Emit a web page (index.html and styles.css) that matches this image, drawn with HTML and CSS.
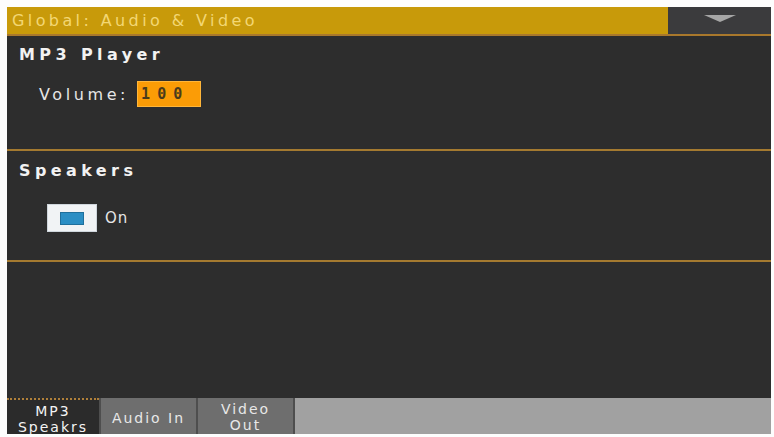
FILE: index.html
```html
<!DOCTYPE html>
<html lang="en">
  <head>
    <meta charset="UTF-8" />
    <meta name="viewport" content="width=device-width, initial-scale=1.0" />
    <title>Global: Audio &amp; Video</title>
    <link rel="stylesheet" href="styles.css">
  </head>
  <body>
    <div class="screen">
      <header class="titlebar">
        <h1>Global: Audio &amp; Video</h1>
        <button class="menu" aria-label="Menu"><i></i></button>
      </header>

      <section class="panel mp3">
        <h2>MP3 Player</h2>
        <div class="field">
          <label>Volume:</label>
          <span class="value">100</span>
        </div>
      </section>

      <section class="panel speakers">
        <h2>Speakers</h2>
        <label class="check">
          <span class="box"><i></i></span>
          On
        </label>
      </section>

      <div class="spacer"></div>

      <nav class="tabs">
        <span class="tab active">MP3<br>Speakrs</span>
        <span class="tab">Audio In</span>
        <span class="tab two-line">Video<br>Out</span>
        <span class="rest"></span>
      </nav>
    </div>
  </body>
</html>
```

FILE: styles.css
```css
body {
  margin: 0;
  padding: 7px 3px 3px 7px;
  background: #fdfdfd;
  font-family: "DejaVu Sans", sans-serif;
}
.screen {
  width: 764px;
  height: 427px;
  background: #2d2d2d;
  display: flex;
  flex-direction: column;
  overflow: hidden;
}
.titlebar {
  display: flex;
  height: 27px;
  border-bottom: 2px solid #a9782c;
  h1 {
    flex-grow: 1;
    margin: 0;
    background: #c89a0a;
    color: #f3d774;
    font-size: 16px;
    font-weight: 400;
    letter-spacing: 3.4px;
    line-height: 27px;
    padding-left: 5px;
  }
}
.menu {
  width: 103px;
  border: 0;
  padding: 0;
  background: #3b3b3d;
  display: flex;
  justify-content: center;
  align-items: center;
  i {
    width: 0;
    height: 0;
    border-left: 16px solid transparent;
    border-right: 16px solid transparent;
    border-top: 7px solid #a6a6a6;
    margin-top: -4px;
  }
}
.panel {
  border-bottom: 2px solid #a47a30;
  padding: 0 12px;
  h2 {
    margin: 0;
    color: #f2f2f2;
    font-size: 16px;
    font-weight: 700;
    letter-spacing: 4.4px;
  }
}
.mp3 {
  height: 113px;
  h2 {
    padding-top: 9px;
  }
}
.field {
  display: flex;
  align-items: center;
  gap: 8px;
  margin: 17px 0 0 20px;
  label {
    color: #e6e6e6;
    font-size: 16px;
    letter-spacing: 3.6px;
  }
  .value {
    width: 64px;
    height: 26px;
    box-sizing: border-box;
    background: #fb9c06;
    border: 1px solid #ffb63a;
    color: #4a3b1c;
    font-family: "DejaVu Sans Mono", monospace;
    font-size: 15px;
    font-weight: 700;
    letter-spacing: 7px;
    line-height: 24px;
    padding-left: 3px;
  }
}
.speakers {
  height: 109px;
  h2 {
    padding-top: 10px;
  }
}
.check {
  display: flex;
  align-items: center;
  gap: 8px;
  margin: 24px 0 0 28px;
  color: #e6e6e6;
  font-size: 15px;
  letter-spacing: 1px;
  .box {
    width: 50px;
    height: 28px;
    box-sizing: border-box;
    background: #f1f3f5;
    border: 1px solid #cfd6dc;
    display: flex;
    justify-content: center;
    align-items: center;
  }
  i {
    width: 22px;
    height: 11px;
    background: #2b8ec4;
    border: 1px solid #1f6f9c;
  }
}
.spacer {
  flex-grow: 1;
}
.tabs {
  display: flex;
  height: 36px;
  gap: 2px;
  background: #4e4e4e;
  .tab {
    width: 95px;
    flex-shrink: 0;
    background: #6e6e6e;
    color: #e8e8e8;
    font-size: 14px;
    letter-spacing: 2px;
    line-height: 16px;
    text-align: center;
    display: flex;
    align-items: center;
    justify-content: center;
    padding-top: 4px;
    box-sizing: border-box;
    &.active {
      width: 92px;
      background: #2b2b2b;
      color: #f4f4f4;
      border-top: 2px dotted #b0803a;
    }
  }
  .two-line,
  .active {
    padding-top: 3px;
    align-items: flex-start;
  }
  .rest {
    flex-grow: 1;
    background: #a1a1a1;
  }
}
```
